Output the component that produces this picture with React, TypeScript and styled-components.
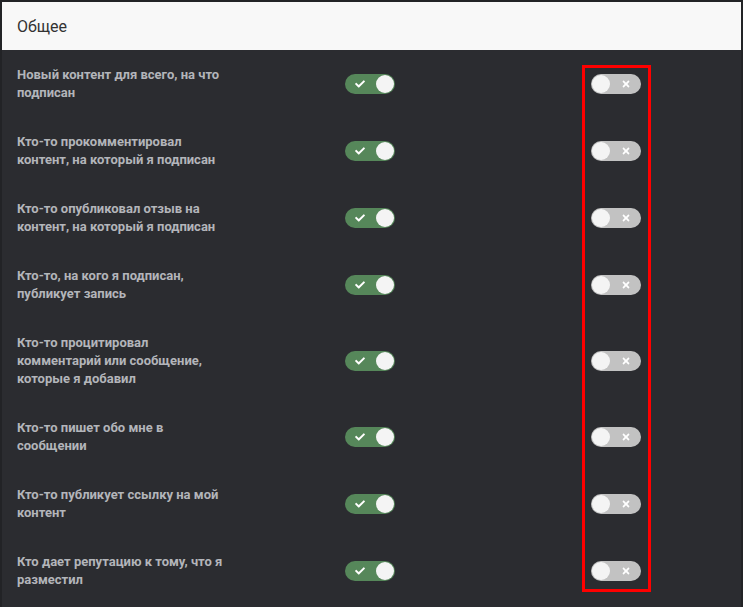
import styled, { createGlobalStyle } from 'styled-components'
import { FaCheck, FaTimes } from 'react-icons/fa'

const GlobalStyle = createGlobalStyle`
  html, body {
    margin: 0;
    padding: 0;
    background: #222326;
  }
  body {
    font-family: Roboto, "Noto Sans", "Liberation Sans", sans-serif;
  }
`

const rows = [
  'Новый контент для всего, на что подписан',
  'Кто-то прокомментировал контент, на который я подписан',
  'Кто-то опубликовал отзыв на контент, на который я подписан',
  'Кто-то, на кого я подписан, публикует запись',
  'Кто-то процитировал комментарий или сообщение, которые я добавил',
  'Кто-то пишет обо мне в сообщении',
  'Кто-то публикует ссылку на мой контент',
  'Кто дает репутацию к тому, что я разместил',
]

const Panel = styled.div({
  position: 'relative',
  width: '743px',
  height: '607px',
  boxSizing: 'border-box',
  padding: '2px 2px 0 2px',
  background: '#222326',
  overflow: 'hidden',
})

const Header = styled.div({
  height: '48px',
  background: '#f8f8f8',
  display: 'flex',
  alignItems: 'center',
  paddingLeft: '15px',
  fontSize: '16px',
  color: '#333',
})

const Body = styled.div({
  background: '#2b2c30',
  height: '100%',
})

const Row = styled.div({
  display: 'grid',
  gridTemplateColumns: '328px 246px 60px',
  alignItems: 'center',
  padding: '15.5px 0 15.5px 15px',
})

const Label = styled.div({
  width: '212px',
  fontSize: '13px',
  fontWeight: 700,
  lineHeight: '18px',
  color: '#b3b5ba',
})

const Track = styled.div<{ $on: boolean }>(({ $on }) => ({
  width: '50px',
  height: '20px',
  borderRadius: '10px',
  background: $on ? '#56875a' : '#c2c2c2',
  display: 'flex',
  alignItems: 'center',
  flexDirection: $on ? 'row' : 'row-reverse',
  justifyContent: 'space-between',
  padding: '0 1px 0 1px',
  boxSizing: 'border-box',
  color: '#fff',
}))

const IconSlot = styled.div({
  width: '28px',
  display: 'flex',
  justifyContent: 'center',
  alignItems: 'center',
})

const Knob = styled.div({
  width: '18px',
  height: '18px',
  borderRadius: '50%',
  background: '#f4f4f4',
})

const Highlight = styled.div({
  position: 'absolute',
  left: '582px',
  top: '65px',
  width: '69px',
  height: '527px',
  boxSizing: 'border-box',
  border: '3px solid #ff0000',
  pointerEvents: 'none',
})

const Toggle = ({ on }: { on: boolean }) => (
  <Track $on={on}>
    <IconSlot>{on ? <FaCheck size={10} /> : <FaTimes size={10} />}</IconSlot>
    <Knob />
  </Track>
)

const App = () => {
  return (
    <Panel>
      <GlobalStyle />
      <Header>Общее</Header>
      <Body>
        {rows.map(text => (
          <Row key={text}>
            <Label>{text}</Label>
            <Toggle on />
            <Toggle on={false} />
          </Row>
        ))}
      </Body>
      <Highlight />
    </Panel>
  )
}

export default App
